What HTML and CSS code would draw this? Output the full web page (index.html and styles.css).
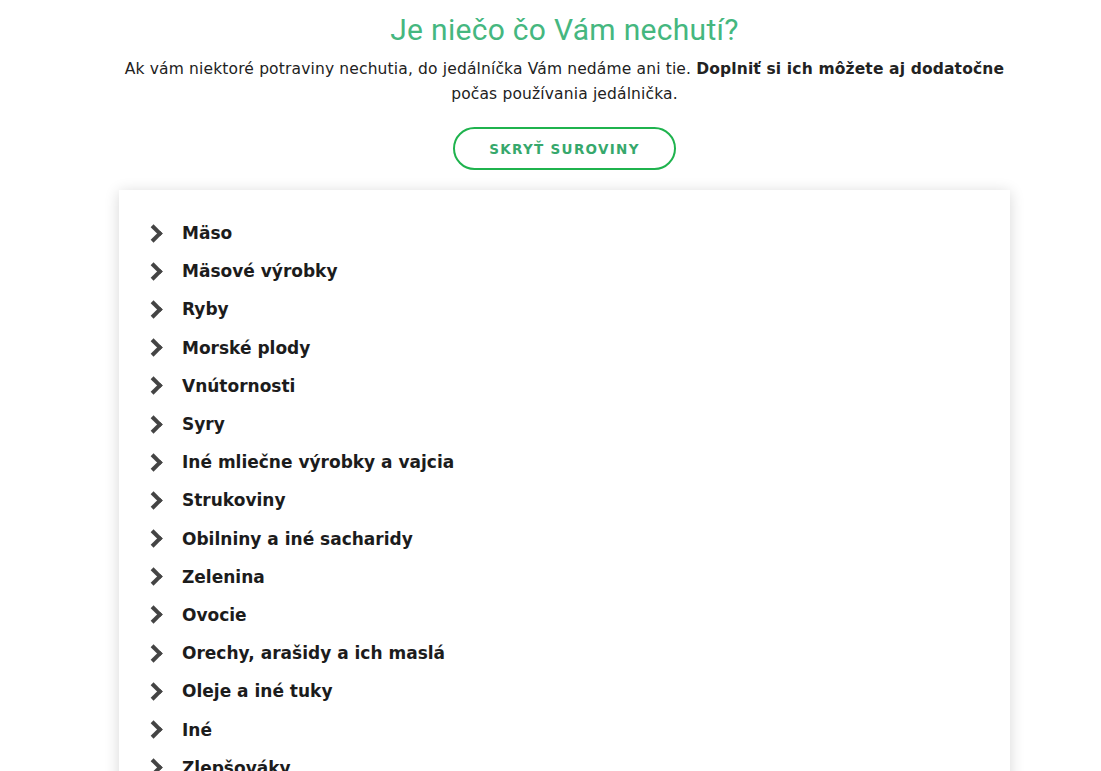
FILE: index.html
```html
<!DOCTYPE html>
<html lang="sk">

<head>
    <meta charset="UTF-8">
    <meta name="viewport" content="width=device-width, initial-scale=1.0">
    <title>Je niečo čo Vám nechutí?</title>
    <link rel="stylesheet" href="styles.css">
</head>

<body>
    <div class="wrap">
        <h1 class="title">Je niečo čo Vám nechutí?</h1>
        <p class="lead">Ak vám niektoré potraviny nechutia, do jedálníčka Vám nedáme ani tie. <b>Doplniť si ich môžete aj dodatočne</b> počas používania jedálnička.</p>

        <div class="actions">
            <button class="toggle">SKRYŤ SUROVINY</button>
        </div>

        <div class="card">
            <ul class="groups">
                <li><span class="chev"></span>Mäso</li>
                <li><span class="chev"></span>Mäsové výrobky</li>
                <li><span class="chev"></span>Ryby</li>
                <li><span class="chev"></span>Morské plody</li>
                <li><span class="chev"></span>Vnútornosti</li>
                <li><span class="chev"></span>Syry</li>
                <li><span class="chev"></span>Iné mliečne výrobky a vajcia</li>
                <li><span class="chev"></span>Strukoviny</li>
                <li><span class="chev"></span>Obilniny a iné sacharidy</li>
                <li><span class="chev"></span>Zelenina</li>
                <li><span class="chev"></span>Ovocie</li>
                <li><span class="chev"></span>Orechy, arašidy a ich maslá</li>
                <li><span class="chev"></span>Oleje a iné tuky</li>
                <li><span class="chev"></span>Iné</li>
                <li><span class="chev"></span>Zlepšováky</li>
            </ul>
        </div>
    </div>
</body>

</html>
```

FILE: styles.css
```css
body {
    font-family: "DejaVu Sans", "Liberation Sans", Arial, sans-serif;
    margin: 0;
    padding: 0 0 0 28px;
    color: #222;
    background-color: #fff;
    overflow: hidden;
}

.wrap {
    width: 891px;
    margin: 0 auto;
}

.title {
    margin: 13px 0 0;
    font-family: Roboto, "Liberation Sans", Arial, sans-serif;
    font-size: 30px;
    font-weight: 400;
    letter-spacing: 0.3px;
    line-height: 34px;
    color: #45b77f;
    text-align: center;
}

.lead {
    margin: 10px -5px 0;
    font-size: 15.5px;
    letter-spacing: 0.15px;
    line-height: 25px;
    text-align: center;
    color: #222;
}

.lead b {
    font-weight: 700;
}

.actions {
    display: flex;
    justify-content: center;
    margin-top: 20px;
}

.toggle {
    width: 223px;
    height: 43px;
    border: 2px solid #1fb34e;
    border-radius: 22px;
    background: #fff;
    color: #36a86c;
    font-family: "DejaVu Sans", "Liberation Sans", Arial, sans-serif;
    font-size: 13.5px;
    font-weight: 700;
    letter-spacing: 1.3px;
    cursor: pointer;
}

.card {
    margin-top: 20px;
    background-color: #fff;
    box-shadow: 0 2px 14px rgba(0, 0, 0, 0.16);
    padding: 24px 0 40px;
    min-height: 700px;
}

.groups {
    list-style: none;
    margin: 0;
    padding: 0 0 0 31px;
}

.groups li {
    display: flex;
    align-items: center;
    height: 38.2px;
    font-size: 17px;
    font-weight: 700;
    color: #1c1c1c;
}

.chev {
    width: 9px;
    height: 9px;
    border-top: 4px solid #444;
    border-right: 4px solid #444;
    transform: rotate(45deg);
    margin: 0 19px 0 0;
    position: relative;
    left: -3px;
}
```
